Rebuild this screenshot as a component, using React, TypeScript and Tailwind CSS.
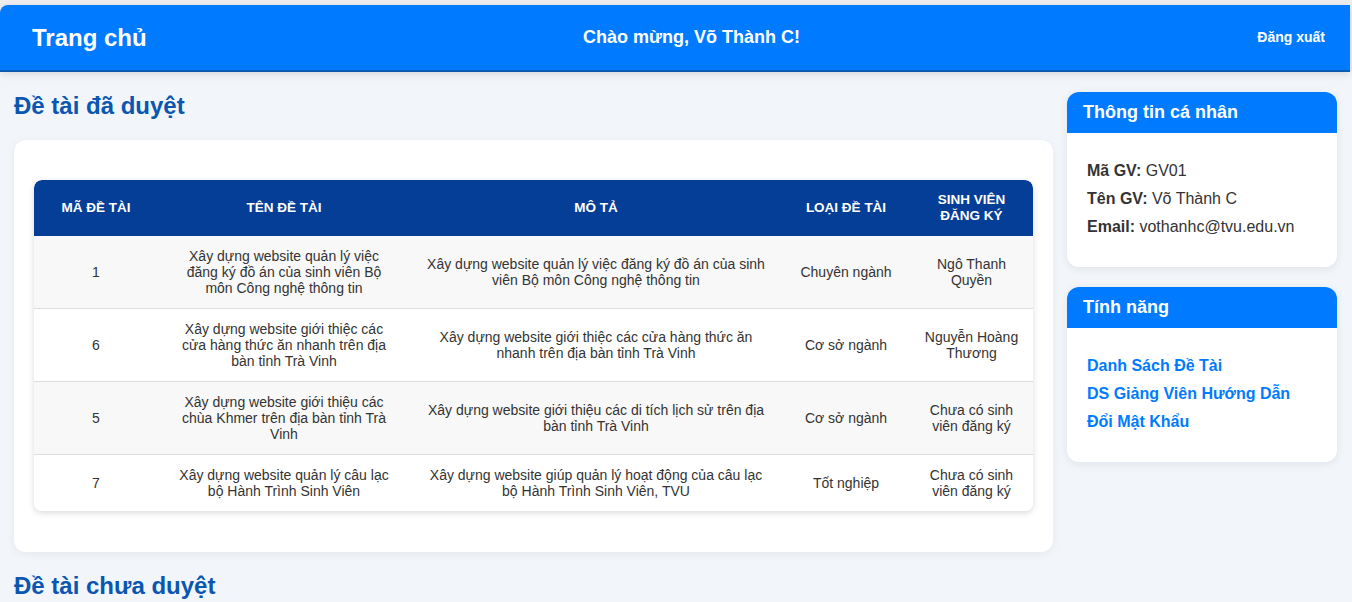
import React from 'react';

const rows = [
    {
        id: '1',
        name: 'Xây dựng website quản lý việc đăng ký đồ án của sinh viên Bộ môn Công nghệ thông tin',
        desc: 'Xây dựng website quản lý việc đăng ký đồ án của sinh viên Bộ môn Công nghệ thông tin',
        type: 'Chuyên ngành',
        student: 'Ngô Thanh Quyền',
    },
    {
        id: '6',
        name: 'Xây dựng website giới thiệc các cửa hàng thức ăn nhanh trên địa bàn tỉnh Trà Vinh',
        desc: 'Xây dựng website giới thiệc các cửa hàng thức ăn nhanh trên địa bàn tỉnh Trà Vinh',
        type: 'Cơ sở ngành',
        student: 'Nguyễn Hoàng Thương',
    },
    {
        id: '5',
        name: 'Xây dựng website giới thiệu các chùa Khmer trên địa bàn tỉnh Trà Vinh',
        desc: 'Xây dựng website giới thiệu các di tích lịch sử trên địa bàn tỉnh Trà Vinh',
        type: 'Cơ sở ngành',
        student: 'Chưa có sinh viên đăng ký',
    },
    {
        id: '7',
        name: 'Xây dựng website quản lý câu lạc bộ Hành Trình Sinh Viên',
        desc: 'Xây dựng website giúp quản lý hoạt động của câu lạc bộ Hành Trình Sinh Viên, TVU',
        type: 'Tốt nghiệp',
        student: 'Chưa có sinh viên đăng ký',
    },
];

export default function App() {
    return (
        <div className="min-h-screen bg-[#f2f5f9] font-['Liberation_Sans',Arial,sans-serif] text-[#333]">
            {/* window strip */}
            <div className="bg-[#eeedf0] pt-[5px] pr-[2px]">
                <header className="flex h-[67px] items-center justify-between rounded-tl-lg border-b-2 border-[#0a5cb3] bg-[#007bff] pl-8 pr-[25px] shadow-[0_2px_8px_rgba(0,0,0,0.12)]">
                    <h1 className="w-[200px] text-[24px] font-bold text-white">Trang chủ</h1>
                    <div className="ml-[26px] text-[18px] font-bold text-white">Chào mừng, Võ Thành C!</div>
                    <a className="w-[200px] text-right text-[14px] font-bold text-white">Đăng xuất</a>
                </header>
            </div>

            <main className="flex gap-[14px] pl-[14px] pr-[15px] pt-5">
                <section className="flex-1">
                    <h2 className="text-[24px] font-bold leading-[28px] text-[#0a56b0]">Đề tài đã duyệt</h2>
                    <div className="mt-5 rounded-xl bg-white px-5 pb-[41px] pt-10 shadow-[0_2px_10px_rgba(0,0,0,0.06)]">
                        <table className="w-full table-fixed border-collapse overflow-hidden rounded-lg text-center text-[14px] leading-4 shadow-[0_2px_6px_rgba(0,0,0,0.15)]">
                            <colgroup>
                                <col className="w-[124px]" />
                                <col className="w-[252px]" />
                                <col className="w-[372px]" />
                                <col className="w-[128px]" />
                                <col />
                            </colgroup>
                            <thead>
                                <tr className="bg-[#053e96] text-[13.5px] font-bold uppercase text-white">
                                    <th className="rounded-tl-lg px-[15px] py-3">Mã đề tài</th>
                                    <th className="px-[15px] py-3">Tên đề tài</th>
                                    <th className="px-[15px] py-3">Mô tả</th>
                                    <th className="px-[15px] py-3">Loại đề tài</th>
                                    <th className="rounded-tr-lg px-3 py-3">Sinh viên đăng ký</th>
                                </tr>
                            </thead>
                            <tbody>
                                {rows.map((r, i) => (
                                    <tr
                                        key={r.id}
                                        className={`${i % 2 === 0 ? 'bg-[#f8f8f8]' : 'bg-white'} ${i < rows.length - 1 ? 'border-b border-[#dddddd]' : ''}`}
                                    >
                                        <td className="px-[15px] py-3">{r.id}</td>
                                        <td className="px-[15px] py-3">{r.name}</td>
                                        <td className="px-[15px] py-3">{r.desc}</td>
                                        <td className="px-[15px] py-3">{r.type}</td>
                                        <td className="px-3 py-3">{r.student}</td>
                                    </tr>
                                ))}
                            </tbody>
                        </table>
                    </div>
                    <h2 className="mt-5 text-[24px] font-bold leading-[28px] text-[#0a56b0]">Đề tài chưa duyệt</h2>
                </section>

                <aside className="flex w-[270px] flex-col gap-5">
                    <div className="overflow-hidden rounded-xl bg-white shadow-[0_2px_10px_rgba(0,0,0,0.08)]">
                        <div className="flex h-[41px] items-center bg-[#007bff] px-4 text-[18px] font-bold text-white">
                            Thông tin cá nhân
                        </div>
                        <div className="px-5 pb-[26px] pt-6 text-[16px] leading-7">
                            <p><b>Mã GV:</b> GV01</p>
                            <p><b>Tên GV:</b> Võ Thành C</p>
                            <p><b>Email:</b> vothanhc@tvu.edu.vn</p>
                        </div>
                    </div>
                    <div className="overflow-hidden rounded-xl bg-white shadow-[0_2px_10px_rgba(0,0,0,0.08)]">
                        <div className="flex h-[41px] items-center bg-[#007bff] px-4 text-[18px] font-bold text-white">
                            Tính năng
                        </div>
                        <div className="flex flex-col px-5 pb-[26px] pt-6 text-[16px] font-bold leading-7 text-[#007bff]">
                            <a>Danh Sách Đề Tài</a>
                            <a>DS Giảng Viên Hướng Dẫn</a>
                            <a>Đổi Mật Khẩu</a>
                        </div>
                    </div>
                </aside>
            </main>
        </div>
    );
}
